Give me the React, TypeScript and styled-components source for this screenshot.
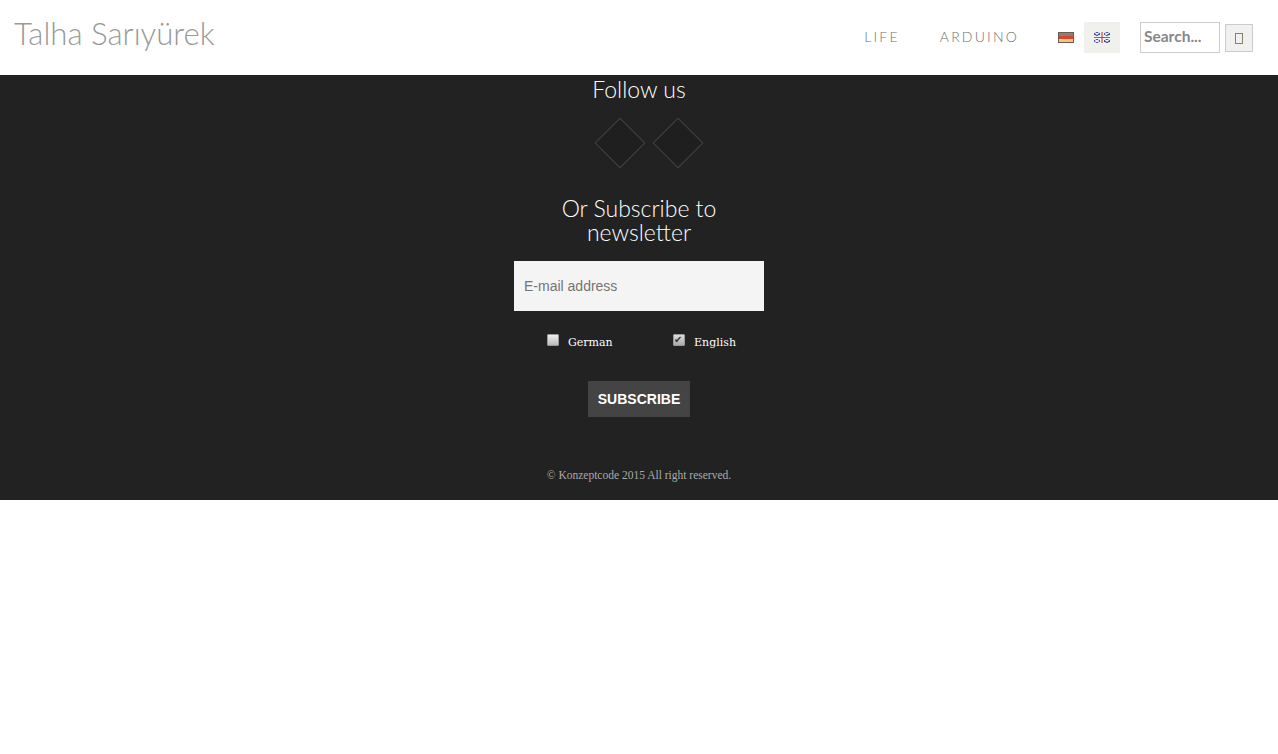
import styled, { createGlobalStyle } from "styled-components";

const GlobalStyle = createGlobalStyle`
  html, body {
    margin: 0;
    padding: 0;
    background: #fff;
  }
  * {
    box-sizing: border-box;
  }
`;

const Header = styled.header`
  display: flex;
  justify-content: space-between;
  height: 75px;
  padding: 0 25px 0 14px;
  background: #fff;
`;

const Brand = styled.a`
  margin-top: 13px;
  font-family: "Lato", sans-serif;
  font-weight: 300;
  font-size: 31.2px;
  line-height: 40px;
  color: #999;
`;

const HeaderRight = styled.div`
  display: flex;
  align-items: flex-start;
  padding-top: 22px;
`;

const Nav = styled.nav`
  display: flex;
  gap: 40px;
  margin-right: 29px;
`;

const NavLink = styled.a`
  font-family: "Lato", sans-serif;
  font-weight: 300;
  font-size: 14px;
  line-height: 29px;
  letter-spacing: 2.2px;
  color: #6f6f6f;
`;

const Langs = styled.div`
  display: flex;
  margin-right: 20px;
`;

const LangItem = styled.a<{ $active?: boolean }>`
  display: flex;
  align-items: center;
  justify-content: center;
  width: 36px;
  height: 31px;
  background: ${(props) => (props.$active ? "#f0f0ec" : "transparent")};
`;

const SearchInput = styled.input`
  width: 80px;
  height: 31px;
  padding: 0 3px 3px;
  border: 1px solid #ccc;
  outline: none;
  background: #fff;
  font-family: "Lato", sans-serif;
  font-weight: 700;
  font-size: 15.5px;
  color: #888;
  &::placeholder {
    color: #888;
    opacity: 1;
  }
`;

const SearchButton = styled.button`
  display: flex;
  align-items: center;
  justify-content: center;
  width: 28px;
  height: 28px;
  margin: 2px 0 0 5px;
  padding: 0;
  border: 1px solid #ccc;
  background: #f0f0ee;
`;

const MissingGlyph = styled.span`
  display: block;
  width: 8px;
  height: 11px;
  border: 1px solid #8a7f66;
`;

const Footer = styled.footer`
  display: flex;
  flex-direction: column;
  align-items: center;
  height: 425px;
  background: #222;
`;

const Heading = styled.h4`
  margin: 0;
  font-family: "Lato", sans-serif;
  font-weight: 300;
  font-size: 23px;
  line-height: 24px;
  text-align: center;
  color: #fff;
`;

const FollowHeading = styled(Heading)`
  margin-top: 2px;
`;

const SubscribeHeading = styled(Heading)`
  margin-top: 35px;
`;

const Socials = styled.div`
  display: flex;
  gap: 22px;
  margin-top: 24px;
  margin-left: 20px;
`;

const Diamond = styled.a`
  display: block;
  width: 36px;
  height: 36px;
  border: 1px solid #444;
  background: #1f1f1f;
  transform: rotate(45deg);
`;

const EmailInput = styled.input`
  width: 250px;
  height: 50px;
  margin-top: 17px;
  padding: 0 10px;
  border: 0;
  outline: none;
  background: #f4f4f4;
  font-family: "Liberation Sans", Arial, sans-serif;
  font-size: 14px;
  color: #555;
  &::placeholder {
    color: #757575;
    opacity: 1;
  }
`;

const Options = styled.div`
  display: flex;
  justify-content: space-between;
  width: 189px;
  margin-top: 21px;
  margin-left: 5px;
`;

const Option = styled.label`
  display: flex;
  gap: 9px;
  font-family: "DejaVu Serif", serif;
  font-size: 11px;
  line-height: 22px;
  color: #fff;
`;

const Check = styled.input`
  appearance: none;
  position: relative;
  width: 12px;
  height: 12px;
  margin: 2px 0 0;
  border: 1px solid #999;
  border-radius: 1px;
  background: linear-gradient(#eee, #bbb);
  &:checked {
    background: linear-gradient(#ddd, #aaa);
  }
  &:checked::after {
    content: "✔";
    position: absolute;
    top: -2px;
    left: 0;
    font-family: "DejaVu Sans", sans-serif;
    font-size: 10px;
    line-height: 14px;
    color: #333;
  }
`;

const SubscribeButton = styled.button`
  width: 102px;
  height: 36px;
  margin-top: 27px;
  padding: 0;
  border: 0;
  background: #444;
  font-family: "Liberation Sans", Arial, sans-serif;
  font-weight: 700;
  font-size: 14px;
  color: #fff;
`;

const Copyright = styled.p`
  margin: 50px 0 0;
  font-family: "Liberation Serif", serif;
  font-size: 11.5px;
  line-height: 16px;
  color: #aaa;
`;

function GermanFlag() {
  return (
    <svg width="16" height="11" viewBox="0 0 16 11">
      <rect width="16" height="11" fill="#6b5b50" />
      <rect x="1" y="1" width="14" height="3" fill="#8a8078" />
      <rect x="1" y="4" width="14" height="3" fill="#d8452f" />
      <rect x="1" y="7" width="14" height="3" fill="#f0c878" />
    </svg>
  );
}

function EnglishFlag() {
  return (
    <svg width="16" height="11" viewBox="0 0 16 11">
      <rect width="16" height="11" fill="#f6f6f6" />
      <path d="M0 0H6V4H0ZM10 0H16V4H10ZM0 7H6V11H0ZM10 7H16V11H10Z" fill="#3a4f98" />
      <path d="M0 0L6 4M6 0L0 4M10 0L16 4M16 0L10 4M0 7L6 11M6 7L0 11M10 7L16 11M16 7L10 11" stroke="#f0f0f4" strokeWidth="1.2" />
      <path d="M8 0V11M0 5.5H16" stroke="#d0443e" strokeWidth="1.2" />
    </svg>
  );
}

export default function App() {
  return (
    <>
      <GlobalStyle />
      <Header>
        <Brand>Talha Sarıyürek</Brand>
        <HeaderRight>
          <Nav>
            <NavLink>LIFE</NavLink>
            <NavLink>ARDUINO</NavLink>
          </Nav>
          <Langs>
            <LangItem>
              <GermanFlag />
            </LangItem>
            <LangItem $active>
              <EnglishFlag />
            </LangItem>
          </Langs>
          <SearchInput placeholder="Search..." />
          <SearchButton>
            <MissingGlyph />
          </SearchButton>
        </HeaderRight>
      </Header>
      <Footer>
        <FollowHeading>Follow us</FollowHeading>
        <Socials>
          <Diamond />
          <Diamond />
        </Socials>
        <SubscribeHeading>
          Or Subscribe to
          <br />
          newsletter
        </SubscribeHeading>
        <EmailInput placeholder="E-mail address" />
        <Options>
          <Option>
            <Check type="checkbox" />
            German
          </Option>
          <Option>
            <Check type="checkbox" defaultChecked />
            English
          </Option>
        </Options>
        <SubscribeButton>SUBSCRIBE</SubscribeButton>
        <Copyright>© Konzeptcode 2015 All right reserved.</Copyright>
      </Footer>
    </>
  );
}
